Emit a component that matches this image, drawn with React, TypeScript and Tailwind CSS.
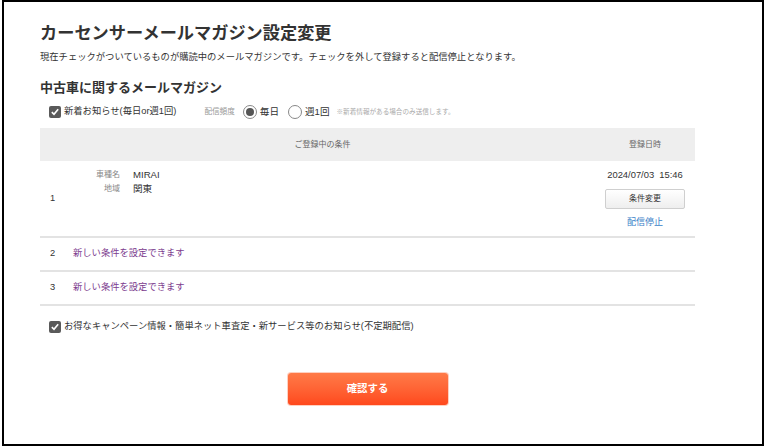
const FONT = { fontFamily: '"Liberation Sans", "Noto Sans CJK JP", sans-serif' };

function Check() {
  return (
    <span className="flex h-[12px] w-[12px] shrink-0 items-center justify-center rounded-[2px] bg-[#5a5a5a]">
      <svg viewBox="0 0 12 12" className="h-[10px] w-[10px]">
        <path d="M2.2 6.2 L4.8 8.8 L9.8 2.8" fill="none" stroke="#fff" strokeWidth="2" />
      </svg>
    </span>
  );
}

function Radio({ on }: { on?: boolean }) {
  return (
    <span className="flex h-[14px] w-[14px] shrink-0 items-center justify-center rounded-full border border-[#888] bg-white">
      {on && <span className="h-[8px] w-[8px] rounded-full bg-[#555]" />}
    </span>
  );
}

const rows = [2, 3];

export default function App() {
  return (
    <div className="h-[446px] w-[764px] bg-white text-[#333]" style={FONT}>
      <div className="ml-[2px] h-[446px] w-[762px] border-2 border-black">
        <div className="w-[691px] pl-[36px] pt-[19px]">
          <h1 className="text-[17.2px] font-bold leading-[24px]">カーセンサーメールマガジン設定変更</h1>
          <p className="mt-[5px] text-[9.3px] leading-[14px]">現在チェックがついているものが購読中のメールマガジンです。チェックを外して登録すると配信停止となります。</p>

          <h2 className="mt-[15px] text-[13px] font-bold leading-[18px]">中古車に関するメールマガジン</h2>

          <div className="mt-[7px] flex h-[16px] items-center pl-[9px]">
            <Check />
            <span className="ml-[3px] text-[9.3px]">新着お知らせ(毎日or週1回)</span>
            <span className="ml-[28px] text-[7.6px] text-[#999]">配信頻度</span>
            <span className="ml-[8px]"><Radio on /></span>
            <span className="ml-[3px] text-[9.6px]">毎日</span>
            <span className="ml-[9px]"><Radio /></span>
            <span className="ml-[3px] text-[9.6px]">週1回</span>
            <span className="ml-[7px] text-[6.6px] text-[#aaa]">※新着情報がある場合のみ送信します。</span>
          </div>

          <div className="mt-[8px] w-[655px]">
            <div className="flex h-[33px] items-center bg-[#eeeeee] text-[8px] text-[#666]">
              <span className="flex-1 pl-[10px] text-center">ご登録中の条件</span>
              <span className="w-[100px] text-center">登録日時</span>
            </div>

            <div className="flex h-[77px] border-b-2 border-[#e3e3e3]">
              <div className="flex w-[33px] items-center pl-[10px] text-[9.3px]">1</div>
              <div className="flex-1 pt-[7px]">
                <div className="flex h-[14px] items-center">
                  <span className="w-[47px] text-right text-[8px] text-[#888]">車種名</span>
                  <span className="ml-[13px] text-[9.6px]">MIRAI</span>
                </div>
                <div className="flex h-[14px] items-center">
                  <span className="w-[47px] text-right text-[8px] text-[#888]">地域</span>
                  <span className="ml-[13px] text-[9.6px]">関東</span>
                </div>
              </div>
              <div className="flex w-[100px] flex-col items-center pt-[7px]">
                <span className="h-[14px] whitespace-pre text-[9.4px] leading-[14px]">2024/07/03  15:46</span>
                <button className="mt-[7px] h-[20px] w-[80px] rounded-[2px] border border-[#cfcfcf] bg-gradient-to-b from-white to-[#eeeeee] text-[8px] text-[#333]">条件変更</button>
                <a className="mt-[6px] h-[14px] text-[9px] leading-[14px] text-[#3b7fc8]">配信停止</a>
              </div>
            </div>

            {rows.map((n) => (
              <div key={n} className="flex h-[34px] items-center border-b-2 border-[#e3e3e3]">
                <span className="w-[33px] pl-[10px] text-[9.3px]">{n}</span>
                <span className="text-[9.3px] text-[#7b3b8e]">新しい条件を設定できます</span>
              </div>
            ))}
          </div>

          <div className="mt-[13px] flex h-[16px] items-center pl-[9px]">
            <Check />
            <span className="ml-[3px] text-[9.3px]">お得なキャンペーン情報・簡単ネット車査定・新サービス等のお知らせ(不定期配信)</span>
          </div>

          <div className="mt-[38px] flex w-[655px] justify-center">
            <button className="h-[32px] w-[160px] rounded-[3px] bg-gradient-to-b from-[#ff7a47] to-[#ff481c] text-[10.4px] font-bold text-white shadow-[0_0_0_1px_#ffd0c0]">確認する</button>
          </div>
        </div>
      </div>
    </div>
  );
}
